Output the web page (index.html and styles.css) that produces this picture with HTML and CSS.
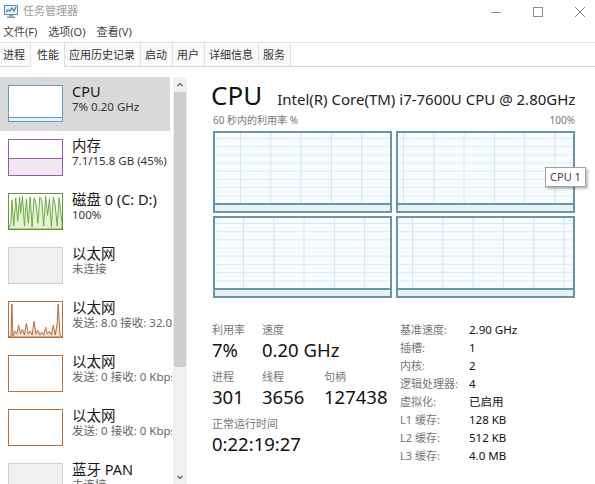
FILE: index.html
```html
<!DOCTYPE html>
<html lang="zh-CN">
<head>
    <meta charset="UTF-8">
    <meta name="viewport" content="width=device-width, initial-scale=1.0">
    <title>任务管理器</title>
    <link rel="stylesheet" href="styles.css">
</head>
<body>
    <div class="window">
        <!-- barra de título -->
        <div class="titlebar">
            <svg class="app-icon" width="14" height="13" viewBox="0 0 14 13">
                <rect x="0.5" y="0.5" width="13" height="9" fill="#e6f2f8" stroke="#5b8fb0"/>
                <polyline points="2,7 4,5 6,6 8,3 10,6 12,2" fill="none" stroke="#2f7fb4" stroke-width="1.2"/>
                <rect x="5" y="10" width="4" height="1.5" fill="#7a9fb5"/>
                <rect x="3" y="11.5" width="8" height="1.5" fill="#7a9fb5"/>
            </svg>
            <span class="app-title">任务管理器</span>
            <div class="controls">
                <svg width="12" height="12" viewBox="0 0 12 12"><line x1="1" y1="6.5" x2="11" y2="6.5" stroke="#8a8a8a"/></svg>
                <svg width="12" height="12" viewBox="0 0 12 12"><rect x="1.5" y="1.5" width="9" height="9" fill="none" stroke="#8a8a8a"/></svg>
                <svg width="12" height="12" viewBox="0 0 12 12"><path d="M1 1 L11 11 M11 1 L1 11" stroke="#8a8a8a" fill="none"/></svg>
            </div>
        </div>

        <div class="menubar">
            <span>文件(F)</span>
            <span>选项(O)</span>
            <span>查看(V)</span>
        </div>

        <div class="tabs">
            <span class="tab">进程</span>
            <span class="tab active">性能</span>
            <span class="tab">应用历史记录</span>
            <span class="tab">启动</span>
            <span class="tab">用户</span>
            <span class="tab">详细信息</span>
            <span class="tab">服务</span>
        </div>

        <div class="main">
            <div class="sidebar">
                <ul class="devices">
                    <li class="device selected">
                        <div class="thumb thumb-cpu"></div>
                        <div class="info"><div class="name">CPU</div><div class="sub">7% 0.20 GHz</div></div>
                    </li>
                    <li class="device">
                        <div class="thumb thumb-mem"></div>
                        <div class="info"><div class="name">内存</div><div class="sub">7.1/15.8 GB (45%)</div></div>
                    </li>
                    <li class="device">
                        <div class="thumb thumb-disk">
                            <svg width="53" height="35" viewBox="0 0 55 36" preserveAspectRatio="none">
                                <polygon points="0,36 0,34 2,30 3,6 5,33 7,4 9,28 11,3 12,20 14,2 16,33 18,5 20,30 22,3 24,34 26,4 28,10 30,30 32,3 34,6 36,33 38,2 40,22 42,5 44,34 46,3 48,12 50,33 52,4 55,30 55,36" fill="#e4f1d6" stroke="#6aa83a" stroke-width="1"/>
                            </svg>
                        </div>
                        <div class="info"><div class="name">磁盘 0 (C: D:)</div><div class="sub">100%</div></div>
                    </li>
                    <li class="device">
                        <div class="thumb thumb-off"></div>
                        <div class="info"><div class="name">以太网</div><div class="sub muted">未连接</div></div>
                    </li>
                    <li class="device">
                        <div class="thumb thumb-net">
                            <svg width="53" height="35" viewBox="0 0 55 36" preserveAspectRatio="none">
                                <polygon points="0,36 2,35 3,2 4,35 6,30 8,33 10,24 12,33 14,28 16,34 18,22 20,33 22,30 24,34 26,20 28,33 30,29 32,34 34,31 36,34 38,26 40,33 42,30 44,34 46,24 48,34 50,22 51,2 53,34 55,36" fill="#f3e2d3" stroke="#b06a38" stroke-width="1"/>
                            </svg>
                        </div>
                        <div class="info"><div class="name">以太网</div><div class="sub muted">发送: 8.0 接收: 32.0 Kbps</div></div>
                    </li>
                    <li class="device">
                        <div class="thumb thumb-net"></div>
                        <div class="info"><div class="name">以太网</div><div class="sub muted">发送: 0 接收: 0 Kbps</div></div>
                    </li>
                    <li class="device">
                        <div class="thumb thumb-net"></div>
                        <div class="info"><div class="name">以太网</div><div class="sub muted">发送: 0 接收: 0 Kbps</div></div>
                    </li>
                    <li class="device">
                        <div class="thumb thumb-off"></div>
                        <div class="info"><div class="name">蓝牙 PAN</div><div class="sub muted">未连接</div></div>
                    </li>
                </ul>
                <div class="scrollbar">
                    <svg class="arrow" width="14" height="15" viewBox="0 0 14 15"><polyline points="4.5,9 7,6.5 9.5,9" fill="none" stroke="#606060" stroke-width="1.2"/></svg>
                    <div class="thumb-bar"></div>
                    <div class="track"></div>
                    <svg class="arrow" width="14" height="12" viewBox="0 0 14 12"><polyline points="4.5,4 7,6.5 9.5,4" fill="none" stroke="#606060" stroke-width="1.2"/></svg>
                </div>
            </div>

            <div class="detail">
                <div class="heading">
                    <span class="big">CPU</span>
                    <span class="model">Intel(R) Core(TM) i7-7600U CPU @ 2.80GHz</span>
                </div>
                <div class="axis">
                    <span>60 秒内的利用率 %</span>
                    <span>100%</span>
                </div>
                <div class="graphs">
                    <div class="graph g1"></div>
                    <div class="graph g2"></div>
                    <div class="graph g3"></div>
                    <div class="graph g4"></div>
                </div>
                <div class="tooltip">CPU 1</div>

                <div class="stats">
                    <div class="stats-left">
                        <div class="stat-grid">
                            <div class="label">利用率</div>
                            <div class="label">速度</div>
                            <div></div>
                            <div class="value">7%</div>
                            <div class="value">0.20 GHz</div>
                            <div></div>
                        </div>
                        <div class="stat-grid">
                            <div class="label">进程</div>
                            <div class="label">线程</div>
                            <div class="label">句柄</div>
                            <div class="value">301</div>
                            <div class="value">3656</div>
                            <div class="value">127438</div>
                        </div>
                        <div class="stat-block">
                            <div class="label">正常运行时间</div>
                            <div class="value">0:22:19:27</div>
                        </div>
                    </div>
                    <table class="specs">
                        <tr><td>基准速度:</td><td>2.90 GHz</td></tr>
                        <tr><td>插槽:</td><td>1</td></tr>
                        <tr><td>内核:</td><td>2</td></tr>
                        <tr><td>逻辑处理器:</td><td>4</td></tr>
                        <tr><td>虚拟化:</td><td>已启用</td></tr>
                        <tr><td>L1 缓存:</td><td>128 KB</td></tr>
                        <tr><td>L2 缓存:</td><td>512 KB</td></tr>
                        <tr><td>L3 缓存:</td><td>4.0 MB</td></tr>
                    </table>
                </div>
            </div>
        </div>
    </div>
</body>
</html>
```

FILE: styles.css
```css
* {
    box-sizing: border-box;
}
body {
    margin: 0;
    font-family: "Noto Sans", "Noto Sans CJK SC", sans-serif;
    color: #222;
    background: #fff;
}
.window {
    width: 595px;
    height: 484px;
    overflow: hidden;
    position: relative;
}

/* barra de título */
.titlebar {
    height: 22px;
    display: flex;
    align-items: center;
    padding-left: 4px;
}
.app-icon {
    margin-right: 5px;
}
.app-title {
    font-size: 11px;
    color: #9a9a9a;
    line-height: 14px;
}
.controls {
    margin-left: auto;
    display: flex;
    gap: 30px;
    padding-right: 9px;
    padding-top: 1px;
}

.menubar {
    height: 20px;
    display: flex;
    align-items: center;
    gap: 11px;
    padding-left: 3px;
    font-size: 11px;
    color: #444;
    line-height: 14px;
}

.tabs {
    height: 25px;
    border-top: 1px solid #e3e3e3;
    border-bottom: 1px solid #d9d9d9;
    display: flex;
    align-items: stretch;
}
.tab {
    font-size: 11px;
    line-height: 23px;
    padding: 0 5px 0 4px;
    border-right: 1px solid #e0e0e0;
    color: #333;
    background: #fafafa;
}
.tab:first-child {
    padding-left: 3px;
}
.tab.active {
    background: #fff;
    padding: 0 5px 0 6px;
    margin-bottom: -1px;
}

.main {
    display: flex;
    height: 417px;
}

/* lista lateral */
.sidebar {
    width: 190px;
    display: flex;
    flex-shrink: 0;
}
.devices {
    list-style: none;
    margin: 0;
    padding: 10px 0 0 0;
    width: 172px;
    overflow: hidden;
    white-space: nowrap;
}
.device {
    width: 170px;
    height: 54px;
    display: flex;
    align-items: flex-start;
    padding: 8px 0 0 8px;
}
.device.selected {
    background: #d9d9d9;
}
.thumb {
    width: 55px;
    height: 37px;
    flex-shrink: 0;
    position: relative;
    background: #fff;
    overflow: hidden;
}
.thumb svg {
    display: block;
}
.thumb-cpu {
    border: 1px solid #5f9fb8;
}
.thumb-cpu::after {
    content: "";
    position: absolute;
    left: 0;
    right: 0;
    bottom: 0;
    height: 3px;
    border-top: 1px solid #5f9fb8;
    background: #e6f2f7;
}
.thumb-mem {
    border: 1px solid #9a5ca7;
}
.thumb-mem::after {
    content: "";
    position: absolute;
    left: 0;
    right: 0;
    bottom: 0;
    height: 45%;
    border-top: 1px solid #9a5ca7;
    background: #f1e8f3;
}
.thumb-disk {
    border: 1px solid #5f9a34;
}
.thumb-off {
    border: 1px solid #cfcfcf;
    background: #f0f0f0;
}
.thumb-net {
    border: 1px solid #b07444;
}
.info {
    margin-left: 9px;
    margin-top: -2px;
}
.name {
    font-size: 14.5px;
    line-height: 17px;
    color: #1a1a1a;
}
.sub {
    font-size: 11.5px;
    line-height: 14px;
    color: #333;
}
.sub.muted {
    color: #666;
}

.scrollbar {
    width: 14px;
    margin-left: 1px;
    margin-top: 10px;
    background: #f0f0f0;
    display: flex;
    flex-direction: column;
}
.scrollbar .arrow {
    flex-shrink: 0;
}
.thumb-bar {
    height: 275px;
    margin: 0 1px;
    background: #cdcdcd;
}
.track {
    flex: 1;
}

/* painel de detalhe */
.detail {
    flex: 1;
    position: relative;
    padding: 13px 0 0 21px;
}
.heading {
    display: flex;
    align-items: baseline;
    white-space: nowrap;
}
.big {
    font-size: 26px;
    line-height: 30px;
    color: #111;
}
.model {
    font-size: 15px;
    margin-left: 15px;
    color: #222;
}
.axis {
    width: 362px;
    margin-left: 2px;
    margin-top: 3px;
    display: flex;
    justify-content: space-between;
    font-size: 10px;
    line-height: 14px;
    color: #777;
}
.graphs {
    width: 362px;
    margin-left: 2px;
    margin-top: 4px;
    display: grid;
    grid-template-columns: 179px 179px;
    grid-template-rows: 82px 82px;
    gap: 3px 4px;
}
.graph {
    position: relative;
    border: 2px solid #6895aa;
    background-color: #f7fcfe;
    background-image:
        linear-gradient(to right, #d3e5ec 1px, transparent 1px),
        linear-gradient(to bottom, #dcebf0 1px, transparent 1px);
    background-size: 30.3px 100%, 100% 8.2px;
}
.g1 { background-position: 25px 0, 0 5px; }
.g2 { background-position: 5px 0, 0 5px; }
.g3 { background-position: 28px 0, 0 5px; }
.g4 { background-position: 14px 0, 0 5px; }
.graph::after {
    content: "";
    position: absolute;
    left: 0;
    right: 0;
    bottom: 0;
    height: 6px;
    border-top: 2px solid #6895aa;
    background: #e6f2f6;
}
.tooltip {
    position: absolute;
    left: 355px;
    top: 100px;
    width: 41px;
    height: 20px;
    background: #fff;
    border: 1px solid #a0a0a0;
    box-shadow: 2px 2px 2px rgba(0, 0, 0, 0.25);
    font-size: 11px;
    line-height: 18px;
    text-align: center;
    color: #444;
}

.stats {
    display: flex;
    margin-top: 25px;
    margin-left: 1px;
}
.stats-left {
    width: 188px;
}
.stat-grid {
    display: grid;
    grid-template-columns: 50px 62px auto;
    margin-bottom: 7px;
}
.label {
    font-size: 11px;
    line-height: 14px;
    color: #777;
}
.value {
    font-size: 18.5px;
    line-height: 26px;
    color: #111;
    white-space: nowrap;
}
.specs {
    border-collapse: collapse;
    margin-top: -2px;
}
.specs td {
    padding: 0;
    height: 18px;
    font-size: 11px;
    line-height: 18px;
    vertical-align: middle;
}
.specs td:first-child {
    width: 69px;
    color: #777;
}
.specs td:last-child {
    font-size: 11.5px;
    color: #111;
}
```
